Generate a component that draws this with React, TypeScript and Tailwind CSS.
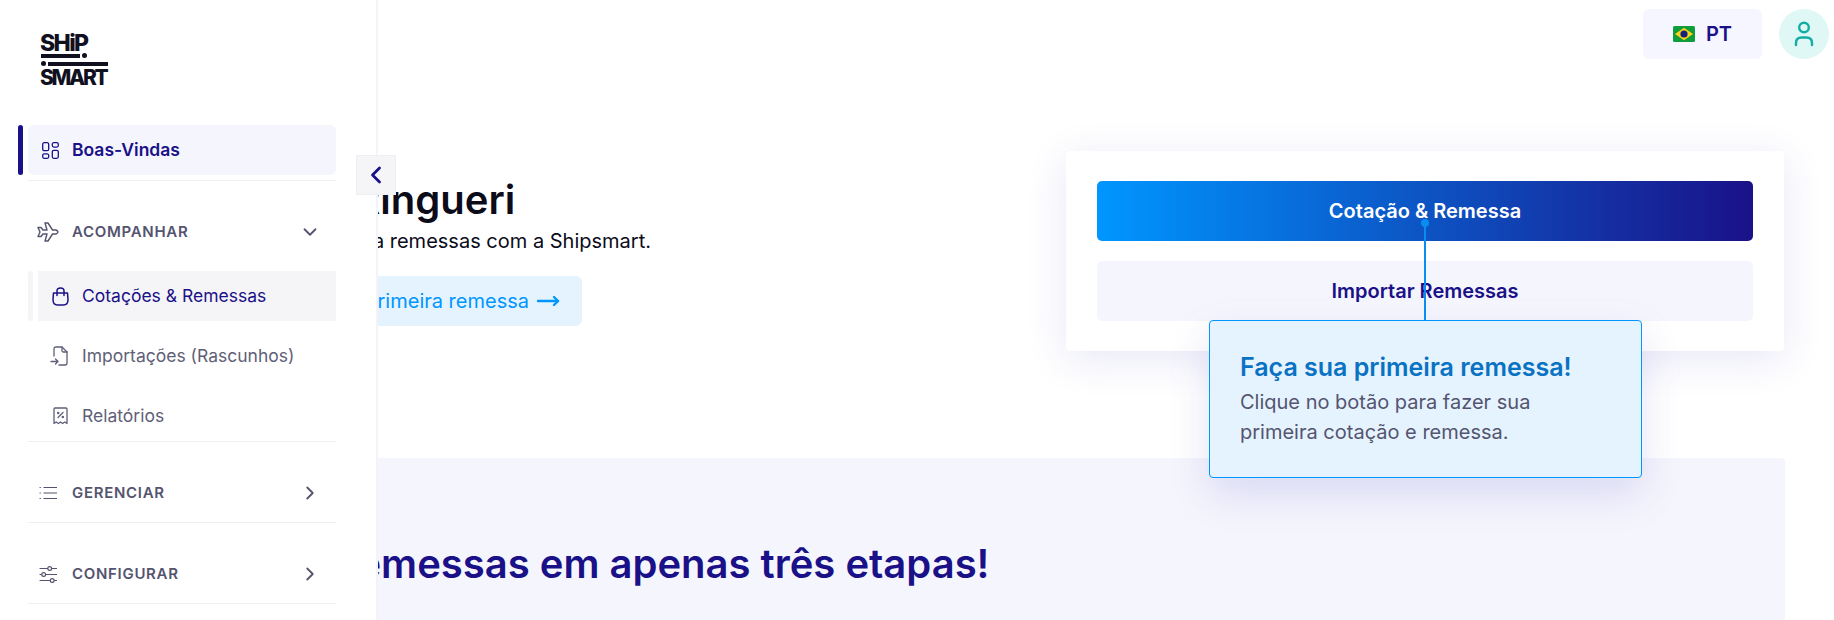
import { ChevronDown, ChevronLeft, ChevronRight, MoveRight } from "lucide-react";

const NAVY = "text-[#1a1188]";

function GridIcon() {
  return (
    <svg width="17" height="17" viewBox="0 0 17 17" fill="none" stroke="currentColor" strokeWidth="1.3">
      <rect x="0.7" y="0.7" width="6" height="8" rx="1.5" />
      <rect x="10.3" y="0.7" width="6" height="4.4" rx="1.5" />
      <rect x="0.7" y="11.9" width="6" height="4.4" rx="1.5" />
      <rect x="10.3" y="8.3" width="6" height="8" rx="1.5" />
    </svg>
  );
}

function PlaneIcon() {
  return (
    <svg width="22" height="20" viewBox="0 0 22 20" fill="none" stroke="currentColor" strokeWidth="1.4" strokeLinejoin="round">
      <path d="M1 5.5 L4 5.5 L6 8 L10 8 L8 1 L11 1 L15.5 8 L19 8 Q21 9 21 10 Q21 11 19 12 L15.5 12 L11 19 L8 19 L10 12 L6 12 L4 14.5 L1 14.5 L3 10 Z" />
    </svg>
  );
}

function BagIcon() {
  return (
    <svg width="17" height="19" viewBox="0 0 17 19" fill="none" stroke="currentColor" strokeWidth="1.5" strokeLinejoin="round" strokeLinecap="round">
      <path d="M1.5 6 H15.5 L16 12.5 Q16 18 11.5 18 H5.5 Q1 18 1 12.5 Z" />
      <path d="M5 8.5 V4 Q5 1 8.5 1 Q12 1 12 4 V8.5" />
    </svg>
  );
}

function ImportIcon() {
  return (
    <svg width="18" height="20" viewBox="0 0 18 20" fill="none" stroke="currentColor" strokeWidth="1.3" strokeLinejoin="round" strokeLinecap="round">
      <path d="M4 10 V3 Q4 1 6 1 H12 L17 6 V17 Q17 19 15 19 H9" />
      <path d="M12 1 V4.5 Q12 6 13.5 6 H17" />
      <path d="M1 15.5 H8 M5.5 13 L8 15.5 L5.5 18" />
    </svg>
  );
}

function ReceiptIcon() {
  return (
    <svg width="15" height="18" viewBox="0 0 15 18" fill="none" stroke="currentColor" strokeWidth="1.3" strokeLinejoin="round" strokeLinecap="round">
      <path d="M1 16.5 V2 Q1 1 2 1 H13 Q14 1 14 2 V16.5 L11.8 15 L9.6 16.5 L7.5 15 L5.4 16.5 L3.2 15 Z" />
      <path d="M5 10.5 L10 5.5" />
      <circle cx="5.2" cy="6" r="0.6" />
      <circle cx="9.8" cy="10" r="0.6" />
    </svg>
  );
}

function ListIcon() {
  return (
    <svg width="18" height="14" viewBox="0 0 18 14" fill="none" stroke="currentColor" strokeWidth="1.2" strokeLinecap="round">
      <path d="M5 1.5 H17.5 M5 7 H17.5 M5 12.5 H17.5" />
      <path d="M1 1.5 H1.4 M1 7 H1.4 M1 12.5 H1.4" />
    </svg>
  );
}

function SlidersIcon() {
  return (
    <svg width="18" height="17" viewBox="0 0 18 17" fill="none" stroke="currentColor" strokeWidth="1.2" strokeLinecap="round">
      <path d="M1 2.5 H8.5 M13 2.5 H17.5 M1 8.5 H2.5 M7 8.5 H17.5 M1 14.5 H11 M15.5 14.5 H17.5" />
      <circle cx="10.7" cy="2.5" r="1.9" />
      <circle cx="4.7" cy="8.5" r="1.9" />
      <circle cx="13.2" cy="14.5" r="1.9" />
    </svg>
  );
}

function BrazilFlag() {
  return (
    <svg width="22" height="16" viewBox="0 0 22 16">
      <rect width="22" height="16" rx="1.5" fill="#0f9d3c" />
      <path d="M11 1.8 L20 8 L11 14.2 L2 8 Z" fill="#fcd116" />
      <circle cx="11" cy="8" r="3.6" fill="#14247a" />
    </svg>
  );
}

function UserIcon() {
  return (
    <svg width="20" height="26" viewBox="0 0 20 26" fill="none" stroke="#12ada3" strokeWidth="2.4" strokeLinecap="round">
      <circle cx="10" cy="6.5" r="4.8" />
      <path d="M2 24 V22 Q2 16.5 7.5 16.5 H12.5 Q18 16.5 18 22 V24" />
    </svg>
  );
}

function SectionRow({ icon, label, open }: { icon: React.ReactNode; label: string; open?: boolean }) {
  return (
    <div className="flex h-[50px] items-center text-[#54546f]">
      <div className="flex w-[44px] shrink-0 justify-center pr-[4px]">{icon}</div>
      <span className="text-[15px] font-semibold tracking-[0.7px]">{label}</span>
      <div className="ml-auto mr-[15px]">
        {open ? <ChevronDown size={22} strokeWidth={2} /> : <ChevronRight size={22} strokeWidth={2} />}
      </div>
    </div>
  );
}

function Sidebar() {
  return (
    <aside className="absolute left-0 top-0 h-full w-[378px] border-r-[2px] border-[#f4f4f8] bg-white">
      {/* Logo */}
      <div className="ml-[40px] flex h-[84px] w-[68px] flex-col pt-[35px] text-[#10101f]">
        <span className="text-[23px] leading-[17px] font-extrabold tracking-[-1.6px]">SHiP</span>
        <div className="mt-[1px] flex items-center gap-[2px] pl-[1px]">
          <div className="h-[4px] w-[39px] bg-[#10101f]" />
          <div className="h-[5px] w-[5px] rounded-full bg-[#10101f]" />
        </div>
        <div className="mt-[3px] flex items-center gap-[2px] pl-[1px]">
          <div className="h-[5px] w-[5px] rounded-full bg-[#10101f]" />
          <div className="h-[4px] w-[60px] bg-[#10101f]" />
        </div>
        <span className="mt-[3px] text-[21px] leading-[17px] font-extrabold tracking-[-2.3px]">SMART</span>
      </div>

      <div className="ml-[18px] mt-[41px] w-[318px]">
        {/* Active page */}
        <div className="flex gap-[5px]">
          <div className="h-[50px] w-[5px] rounded-full bg-[#1a1188]" />
          <div className={`flex h-[50px] flex-1 items-center rounded-[6px] bg-[#f5f6fd] pl-[14px] ${NAVY}`}>
            <GridIcon />
            <span className="ml-[13px] text-[17.5px] font-semibold">Boas-Vindas</span>
          </div>
        </div>
        <div className="ml-[10px] mt-[5px] border-t border-[#efeff3]" />

        <div className="ml-[10px] mt-[26px]">
          <SectionRow icon={<PlaneIcon />} label="ACOMPANHAR" open />

          <div className="mt-[14px] flex gap-[5px]">
            <div className="h-[50px] w-[5px] rounded-full bg-[#f5f5f7]" />
            <div className={`flex h-[50px] flex-1 items-center bg-[#f5f5f7] pl-[14px] ${NAVY}`}>
              <BagIcon />
              <span className="ml-[13px] text-[17.5px]">Cotações &amp; Remessas</span>
            </div>
          </div>
          <div className="mt-[10px] flex h-[50px] items-center pl-[22px] text-[#5f5f78]">
            <ImportIcon />
            <span className="ml-[14px] text-[17.5px]">Importações (Rascunhos)</span>
          </div>
          <div className="mt-[10px] flex h-[50px] items-center pl-[25px] text-[#5f5f78]">
            <ReceiptIcon />
            <span className="ml-[14px] text-[17.5px]">Relatórios</span>
          </div>
          <div className="border-t border-[#efeff3]" />

          <div className="mt-[26px]">
            <SectionRow icon={<ListIcon />} label="GERENCIAR" />
          </div>
          <div className="mt-[4px] border-t border-[#efeff3]" />
          <div className="mt-[26px]">
            <SectionRow icon={<SlidersIcon />} label="CONFIGURAR" />
          </div>
          <div className="mt-[4px] border-t border-[#efeff3]" />
        </div>
      </div>
    </aside>
  );
}

export default function App() {
  return (
    <div className="relative h-[620px] w-full overflow-hidden bg-white font-['Inter',sans-serif] text-[#0b0b1a]">
      <main className="flex h-full flex-col pl-[124px]">
        {/* Top bar */}
        <header className="flex justify-end gap-[17px] pr-[5px] pt-[9px]">
          <button className={`flex h-[50px] w-[119px] items-center justify-center gap-[11px] rounded-[6px] bg-[#f5f6ff] ${NAVY}`}>
            <BrazilFlag />
            <span className="text-[20px] font-semibold">PT</span>
          </button>
          <div className="flex h-[50px] w-[50px] items-center justify-center rounded-full bg-[#dff8f6]">
            <UserIcon />
          </div>
        </header>

        {/* Hero */}
        <section className="mt-[92px] flex justify-between pr-[50px]">
          <div className="pl-[131px] pt-[26px]">
            <h1 className="ml-[13px] text-[40px] leading-[46px] font-semibold">Olá, Ringueri</h1>
            <p className="ml-[7px] mt-[3px] text-[20px] leading-[30px]">Faça agora a remessas com a Shipsmart.</p>
            <button className="mt-[20px] flex h-[50px] items-center gap-[7px] rounded-[6px] bg-[#e5f3ff] pl-[20px] pr-[22px] text-[20px] text-[#0096ff]">
              Faça sua primeira remessa
              <MoveRight size={24} strokeWidth={2.4} />
            </button>
          </div>

          <div className="flex h-[200px] w-[718px] flex-col gap-[20px] rounded-[4px] bg-white px-[31px] py-[30px] shadow-[0_8px_40px_rgba(60,60,190,0.12)]">
            <button className="h-[60px] rounded-[5px] bg-linear-to-r/srgb from-[#0096ff] to-[#1a1188] pb-[1px] text-[20px] font-semibold text-white">
              Cotação &amp; Remessa
            </button>
            <button className={`h-[60px] rounded-[5px] bg-[#f5f6fd] pb-[1px] text-[20px] font-semibold ${NAVY}`}>
              Importar Remessas
            </button>
          </div>
        </section>

        {/* Steps */}
        <section className="mr-[49px] mt-[107px] flex-1 rounded-t-[4px] bg-[#f5f5fd] pl-[116px] pt-[79px]">
          <h2 className={`text-[40px] leading-[54px] font-semibold ${NAVY}`}>Faça remessas em apenas três etapas!</h2>
        </section>
      </main>

      <Sidebar />

      {/* Collapse toggle */}
      <button className={`absolute left-[356px] top-[155px] flex h-[40px] w-[40px] items-center justify-center border border-[#efeff3] bg-[#f5f5f8] ${NAVY}`}>
        <ChevronLeft size={28} strokeWidth={2.4} />
      </button>

      {/* Onboarding tooltip */}
      <div className="absolute left-[1209px] top-[320px] h-[158px] w-[433px] rounded-[4px] border border-[#0096ff] bg-[#e5f3ff] px-[30px] pt-[30px] shadow-[0_16px_40px_rgba(60,60,190,0.15)]">
        <div className="absolute left-[214px] top-[-98px] h-[98px] w-[2px] bg-[#0a8df0]" />
        <div className="absolute left-[211px] top-[-102px] h-[8px] w-[8px] rounded-full bg-[#0a8df0]" />
        <p className="text-[25px] leading-[32px] font-semibold text-[#0a72c2]">Faça sua primeira remessa!</p>
        <p className="mt-[4px] text-[20px] leading-[30px] text-[#54546f]">
          Clique no botão para fazer sua
          <br />
          primeira cotação e remessa.
        </p>
      </div>
    </div>
  );
}
